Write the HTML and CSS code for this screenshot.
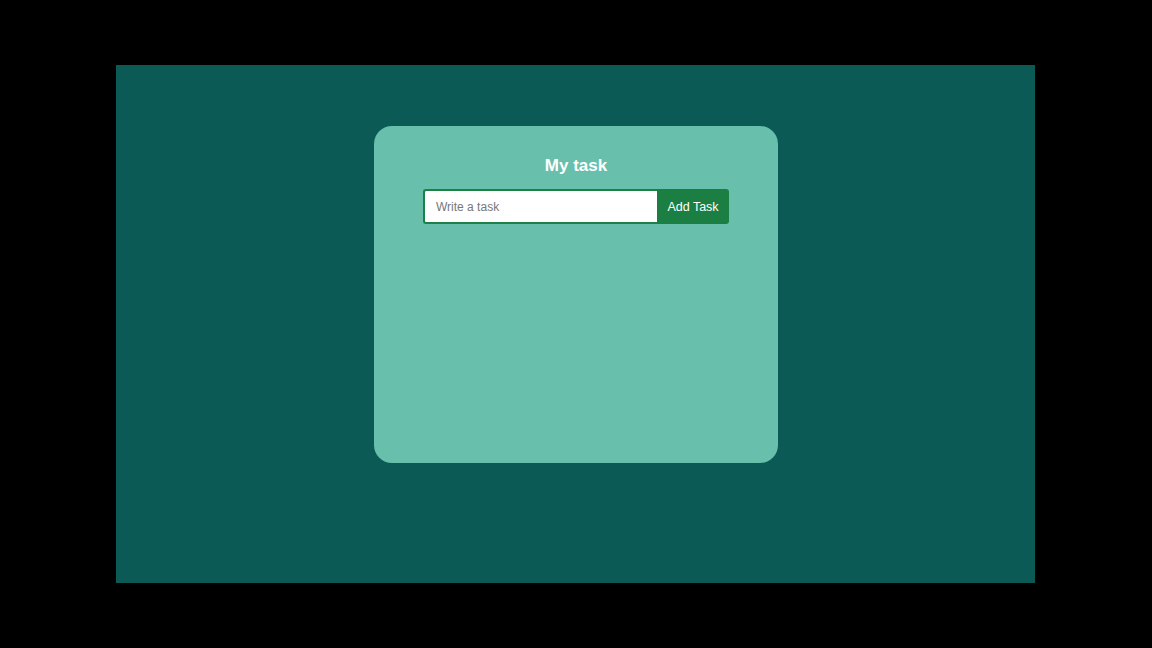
FILE: index.html
```html
<!DOCTYPE html>
<html lang="en">
<head>
<meta charset="utf-8">
<title>My task</title>
<link rel="stylesheet" href="styles.css">
</head>
<body>
  <main class="stage">
    <section class="card">
      <h1 class="title">My task</h1>
      <form class="task-form">
        <input class="task-input" type="text" placeholder="Write a task">
        <button class="task-btn" type="button">Add Task</button>
      </form>
    </section>
  </main>
</body>
</html>
```
FILE: styles.css
```css
html, body {
  margin: 0;
  padding: 0;
}
body {
  background: #000;
  width: 1152px;
  height: 648px;
  display: flex;
  justify-content: center;
  font-family: "Liberation Sans", Arial, sans-serif;
  overflow: hidden;
}
.stage {
  margin-top: 65px;
  margin-right: 1px;
  width: 919px;
  height: 518px;
  background: #0b5a56;
  display: flex;
  justify-content: center;
  align-items: flex-start;
}
.card {
  margin-top: 61px;
  margin-left: 1px;
  width: 404px;
  height: 337px;
  box-sizing: border-box;
  background: #67bfac;
  border-radius: 18px;
  padding-top: 30px;
  display: flex;
  flex-direction: column;
  align-items: center;
}
.title {
  margin: 0;
  font-size: 17px;
  line-height: 20px;
  font-weight: bold;
  color: #ffffff;
}
.task-form {
  margin: 13px 0 0 0;
  display: flex;
}
.task-input {
  width: 234px;
  height: 35px;
  box-sizing: border-box;
  border: 2px solid #1d8046;
  border-right: none;
  border-radius: 3px 0 0 3px;
  padding: 0 11px;
  font-family: "Liberation Sans", Arial, sans-serif;
  font-size: 12px;
  color: #333;
  background: #fff;
  outline: none;
}
.task-input::placeholder {
  color: #777;
}
.task-btn {
  width: 72px;
  height: 35px;
  border: none;
  border-radius: 0 3px 3px 0;
  background: #1b7f43;
  color: #fff;
  font-family: "Liberation Sans", Arial, sans-serif;
  font-size: 12.5px;
  padding: 0;
  cursor: pointer;
}
```
